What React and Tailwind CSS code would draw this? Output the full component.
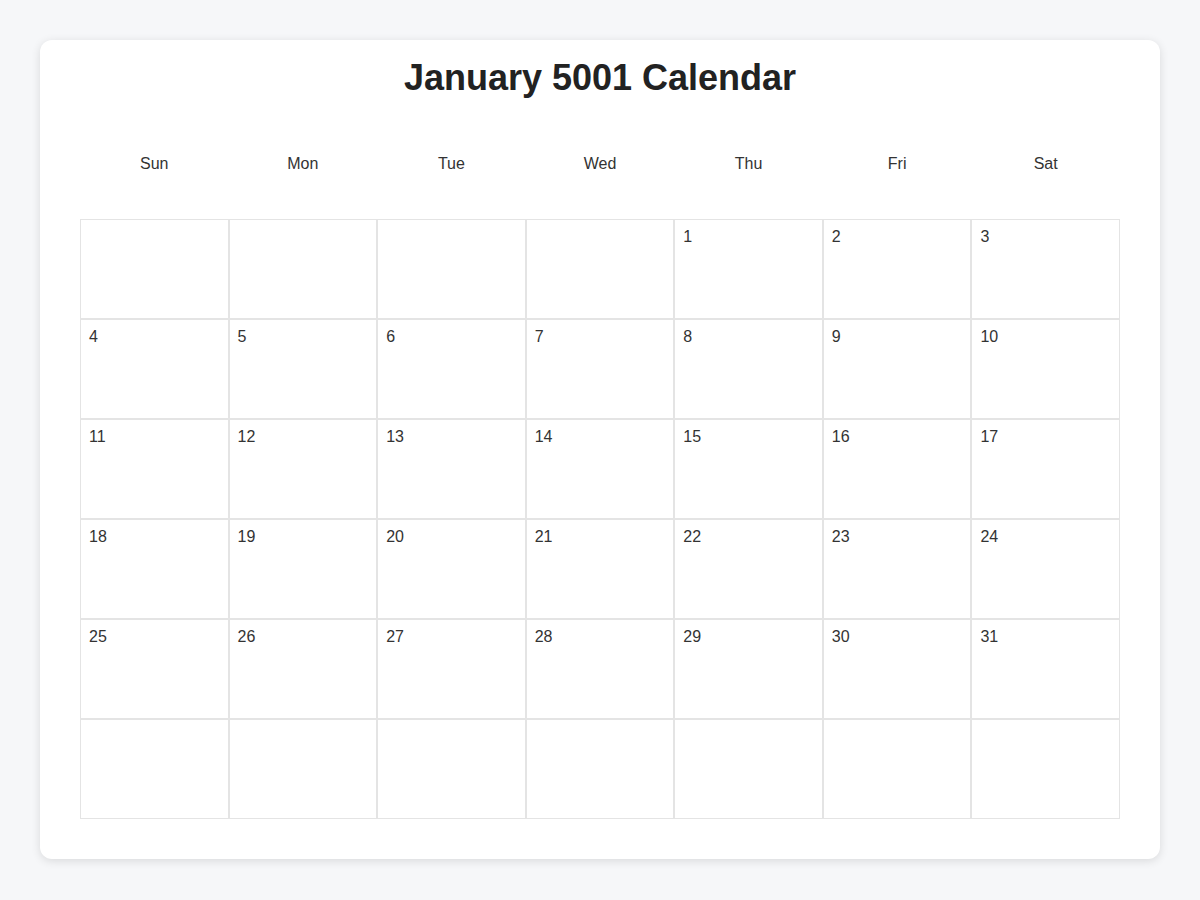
import React from "react";

const days = ["Sun", "Mon", "Tue", "Wed", "Thu", "Fri", "Sat"];

export default function App() {
  const cells = [];
  for (let i = 0; i < 42; i++) {
    const d = i - 3;
    cells.push(d >= 1 && d <= 31 ? d : null);
  }
  return (
    <div
      className="min-h-[900px] w-full bg-[#f6f7f9] px-10 pt-10 pb-10"
      style={{ fontFamily: '"Liberation Sans", Arial, sans-serif' }}
    >
      <div className="flex flex-col rounded-xl bg-white px-10 pt-[17px] pb-10 shadow-[0_2px_10px_rgba(0,0,0,0.12)]">
        <h1 className="text-center text-[36px] font-bold leading-[42px] text-[#222]">
          January 5001 Calendar
        </h1>
        <div className="mt-[45px] grid grid-cols-7">
          {days.map((d) => (
            <div key={d} className="flex h-10 items-center justify-center text-[16px] text-[#333]">
              {d}
            </div>
          ))}
        </div>
        <div className="mt-[35px] grid grid-cols-7">
          {cells.map((c, i) => (
            <div
              key={i}
              className="h-[100px] border border-[#e4e4e4] px-2 pt-[7px] text-[16px] leading-[20px] text-[#333]"
            >
              {c}
            </div>
          ))}
        </div>
      </div>
    </div>
  );
}
